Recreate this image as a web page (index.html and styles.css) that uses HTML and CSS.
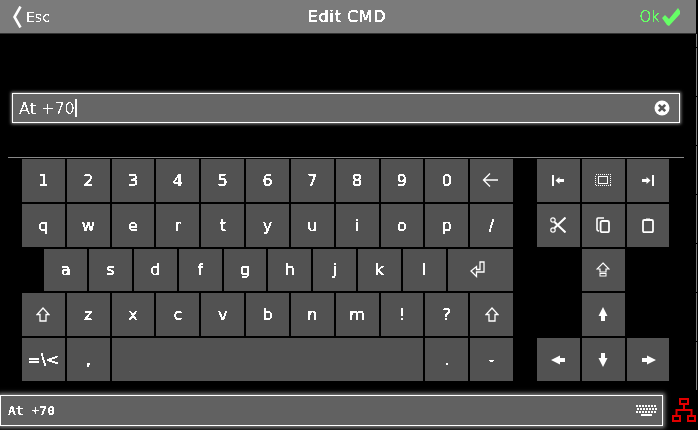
FILE: index.html
```html
<!DOCTYPE html>
<html lang="en">
<head>
<meta charset="utf-8">
<title>Edit CMD</title>
<link rel="stylesheet" href="styles.css">
</head>
<body>
<svg class="defs" width="0" height="0" aria-hidden="true">
  <filter id="crisp-bold" color-interpolation-filters="sRGB" x="0" y="0" width="100%" height="100%"><feComponentTransfer><feFuncA type="discrete" tableValues="0 1 1 1"/></feComponentTransfer></filter>
  <filter id="crisp-thin" color-interpolation-filters="sRGB" x="0" y="0" width="100%" height="100%"><feComponentTransfer><feFuncA type="discrete" tableValues="0 0 0 1 1"/></feComponentTransfer></filter>
  <filter id="crisp-mid" color-interpolation-filters="sRGB" x="0" y="0" width="100%" height="100%"><feComponentTransfer><feFuncA type="discrete" tableValues="0 0 1 1"/></feComponentTransfer></filter>
</svg>
<header class="titlebar">
  <div class="esc"><svg class="chev" viewBox="0 0 10 22" width="10" height="22"><path d="M8.5 0.5 L2.5 11 L8.5 21.5" fill="none" stroke="#fff" stroke-width="2.6"/></svg><span class="mid">Esc</span></div>
  <div class="title"><span class="bold">Edit CMD</span></div>
  <div class="ok"><span class="mid">Ok</span><svg viewBox="0 0 18 18" width="18" height="18"><path d="M0 10 L3 7 L7 11 L16 0 L18 3 L18 6 L7 18 L5 17 Z" fill="#66ff66"/></svg></div>
</header>
<section class="inputarea">
  <div class="field">
    <span class="fieldtext thin">At +70</span><span class="caret"></span>
    <svg class="clear" viewBox="0 0 16 16" width="16" height="16"><circle cx="8" cy="8" r="7.5" fill="#fff"/><path d="M4.8 4.8 L11.2 11.2 M11.2 4.8 L4.8 11.2" stroke="#555" stroke-width="2.6"/></svg>
  </div>
</section>
<hr class="rule">
<main class="keyboard">
  <div class="keys">
    <div class="key"><span class="cap">1</span></div><div class="key"><span class="cap">2</span></div><div class="key"><span class="cap">3</span></div><div class="key"><span class="cap">4</span></div><div class="key"><span class="cap">5</span></div><div class="key"><span class="cap">6</span></div><div class="key"><span class="cap">7</span></div><div class="key"><span class="cap">8</span></div><div class="key"><span class="cap">9</span></div><div class="key"><span class="cap">0</span></div>
    <div class="key back"><svg viewBox="0 0 16 14" width="16" height="14"><path d="M16 7 H1.5 M8 0.5 L1.5 7 L8 13.5" fill="none" stroke="#fff" stroke-width="1.3"/></svg></div>
    <div class="key"><span class="cap">q</span></div><div class="key"><span class="cap">w</span></div><div class="key"><span class="cap">e</span></div><div class="key"><span class="cap">r</span></div><div class="key"><span class="cap">t</span></div><div class="key"><span class="cap">y</span></div><div class="key"><span class="cap">u</span></div><div class="key"><span class="cap">i</span></div><div class="key"><span class="cap">o</span></div><div class="key"><span class="cap">p</span></div><div class="key"><span class="cap">/</span></div>
    <div class="key start2"><span class="cap">a</span></div><div class="key"><span class="cap">s</span></div><div class="key"><span class="cap">d</span></div><div class="key"><span class="cap">f</span></div><div class="key"><span class="cap">g</span></div><div class="key"><span class="cap">h</span></div><div class="key"><span class="cap">j</span></div><div class="key"><span class="cap">k</span></div><div class="key"><span class="cap">l</span></div>
    <div class="key wide3"><svg viewBox="0 0 15 17" width="15" height="17"><path d="M10 1 H14 V11 H6.5 V15.5 L1 10 L6.5 5.5 V8.5 H10 Z" fill="none" stroke="#fff" stroke-width="1.3"/></svg></div>
    <div class="key"><svg viewBox="0 0 14 15" width="14" height="15"><path d="M7 1 L13 7.5 H10 V14 H4 V7.5 H1 Z" fill="none" stroke="#fff" stroke-width="1.3"/></svg></div>
    <div class="key"><span class="cap">z</span></div><div class="key"><span class="cap">x</span></div><div class="key"><span class="cap">c</span></div><div class="key"><span class="cap">v</span></div><div class="key"><span class="cap">b</span></div><div class="key"><span class="cap">n</span></div><div class="key"><span class="cap">m</span></div><div class="key"><span class="cap">!</span></div><div class="key"><span class="cap">?</span></div>
    <div class="key"><svg viewBox="0 0 14 15" width="14" height="15"><path d="M7 1 L13 7.5 H10 V14 H4 V7.5 H1 Z" fill="none" stroke="#fff" stroke-width="1.3"/></svg></div>
    <div class="key"><span class="cap">=\&lt;</span></div><div class="key"><span class="cap">,</span></div><div class="key space"></div><div class="key"><span class="cap">.</span></div><div class="key"><span class="cap">-</span></div>
  </div>
  <div class="nav">
    <div class="key"><svg viewBox="0 0 12 11" width="12" height="11"><path d="M1 0 V11" stroke="#fff" stroke-width="2"/><path d="M3.5 5.5 L7.5 2 V4 H12 V7 H7.5 V9 Z" fill="#fff"/></svg></div>
    <div class="key"><svg class="sharp" viewBox="0 0 16 12" width="16" height="12"><rect x="0.5" y="0.5" width="15" height="11" fill="none" stroke="#fff" stroke-dasharray="1 1"/><rect x="3.5" y="2.5" width="9" height="7" fill="none" stroke="#fff"/></svg></div>
    <div class="key"><svg viewBox="0 0 12 11" width="12" height="11"><path d="M11 0 V11" stroke="#fff" stroke-width="2"/><path d="M8.5 5.5 L4.5 2 V4 H0 V7 H4.5 V9 Z" fill="#fff"/></svg></div>
    <div class="key"><svg viewBox="0 0 16 16" width="16" height="16"><path d="M4.5 5 L15.5 15.5 M4.5 11 L15.5 0.5" stroke="#fff" stroke-width="2"/><circle cx="3" cy="3" r="2.2" fill="none" stroke="#fff" stroke-width="1.2"/><circle cx="3" cy="13" r="2.2" fill="none" stroke="#fff" stroke-width="1.2"/></svg></div>
    <div class="key"><svg viewBox="0 0 14 16" width="14" height="16"><path d="M3 14 Q1 14 1 12 V2 Q1 1 2 1 H8" fill="none" stroke="#fff" stroke-width="1.6"/><rect x="4.6" y="4" width="8.4" height="11.2" rx="1.5" fill="none" stroke="#fff" stroke-width="1.8"/></svg></div>
    <div class="key"><svg viewBox="0 0 12 15" width="12" height="15"><rect x="1" y="2" width="10" height="12.2" rx="1.2" fill="none" stroke="#fff" stroke-width="1.8"/><rect x="4" y="0.5" width="4" height="2.5" fill="#fff"/></svg></div>
    <div class="key col2"><svg viewBox="0 0 14 15" width="14" height="15"><path d="M7 1 L13 7 H10 V10 H4 V7 H1 Z" fill="none" stroke="#fff" stroke-width="1.2"/><rect x="4" y="11.5" width="6" height="2.5" fill="none" stroke="#fff"/></svg></div>
    <div class="key col2"><svg viewBox="0 0 10 15" width="10" height="15"><path d="M5 0 L9.5 9 H7 V14 H3 V9 H0.5 Z" fill="#fff"/></svg></div>
    <div class="key col1"><svg viewBox="0 0 15 10" width="15" height="10"><path d="M0 5 L9 0.5 V3 H14 V7 H9 V9.5 Z" fill="#fff"/></svg></div>
    <div class="key"><svg viewBox="0 0 10 15" width="10" height="15"><path d="M5 15 L9.5 6 H7 V1 H3 V6 H0.5 Z" fill="#fff"/></svg></div>
    <div class="key"><svg viewBox="0 0 15 10" width="15" height="10"><path d="M15 5 L6 0.5 V3 H1 V7 H6 V9.5 Z" fill="#fff"/></svg></div>
  </div>
</main>
<footer class="cmdline">
  <div class="cmdfield">
    <span class="cmdtext">At +70</span>
    <svg class="sharp" viewBox="0 0 21 11" width="21" height="11"><path d="M0 1 H21 M1 4 H21 M0 7 H21" stroke="#fff" stroke-width="2" stroke-dasharray="2 1"/><rect x="5" y="9" width="11" height="2" fill="#fff"/></svg>
  </div>
  <svg class="net" viewBox="0 0 24 24" width="24" height="24"><g fill="none" stroke="#e00000" stroke-width="2"><rect x="8" y="1" width="8" height="5"/><rect x="1" y="18" width="7" height="5"/><rect x="16" y="18" width="7" height="5"/><path d="M12 6 V12 M4.5 18 V12 H19.5 V18"/></g></svg>
</footer>
</body>
</html>
```
FILE: styles.css
```css
* { box-sizing: border-box; }
html, body { margin: 0; height: 100%; }
body {
  position: relative;
  width: 698px;
  height: 430px;
  background: #000;
  color: #fff;
  font-family: "DejaVu Sans", sans-serif;
  overflow: hidden;
  display: flex;
  flex-direction: column;
}
body::after {
  content: "";
  position: absolute;
  left: 696px;
  top: 34px;
  width: 1px;
  height: 356px;
  background: linear-gradient(#000 0 1px, #808080 1px) 0 13px / 100% 49px;
}
.defs { position: absolute; }
.bold, .cap { filter: url(#crisp-bold); }
.thin { filter: url(#crisp-thin); }
.mid { filter: url(#crisp-mid); }
.sharp { shape-rendering: crispEdges; }
.titlebar {
  width: 696px;
  height: 34px;
  background: #7b7b7b;
  border-bottom: 1px solid #333;
  display: grid;
  grid-template-columns: 1fr auto 1fr;
  align-items: center;
  flex: none;
}
.esc { display: flex; align-items: center; gap: 4px; padding-left: 12px; font-size: 14px; }
.title { font-size: 16px; letter-spacing: 0.6px; padding-right: 2px; }
.ok { display: flex; align-items: center; justify-content: flex-end; gap: 2px; padding-right: 16px; color: #66ff66; font-size: 15px; }
.inputarea { height: 123px; padding-top: 59px; flex: none; }
.field {
  margin-left: 12px;
  width: 668px;
  height: 30px;
  background: #666;
  border: 1px solid #fff;
  box-shadow: 0 0 3px 1px rgba(255,255,255,.55);
  display: flex;
  align-items: center;
  padding-left: 6px;
  font-size: 16px;
  color: #fff;
}
.fieldtext { white-space: pre; }
.caret { width: 2px; height: 18px; background: #fff; }
.clear { margin-left: auto; margin-right: 9px; }
.rule { margin: 0 0 0 8px; width: 676px; height: 1px; border: 0; background: #888; flex: none; }
.keyboard { display: flex; padding: 1px 0 0 22px; gap: 24px; flex: none; }
.keys {
  width: 491px;
  display: grid;
  grid-template-columns: repeat(22, 20.41px);
  grid-auto-rows: 42.8px;
  gap: 2px;
}
.keys .key { grid-column: span 2; }
.keys .start2 { grid-column: 2 / span 2; }
.keys .wide3 { grid-column: span 3; padding-right: 5px; }
.keys .space { grid-column: span 14; }
.keys .back { padding-right: 4px; }
.nav {
  display: grid;
  grid-template-columns: repeat(3, 42.82px);
  grid-auto-rows: 42.8px;
  gap: 2px;
  width: 132.5px;
}
.nav .col1 { grid-column: 1; }
.nav .col2 { grid-column: 2; }
.key {
  background: #525252;
  display: flex;
  align-items: center;
  justify-content: center;
  font-size: 16px;
  color: #fff;
}
.cmdline { display: flex; align-items: center; margin-top: 14px; flex: none; }
.cmdfield {
  width: 663px;
  height: 31px;
  background: #616161;
  border: 1px solid #fff;
  box-shadow: 0 0 4px 2px rgba(255,255,255,.5);
  display: flex;
  align-items: center;
  justify-content: space-between;
  padding: 0 5px 0 7px;
}
.cmdtext { font-family: "DejaVu Sans Mono", monospace; font-weight: 700; font-size: 13px; filter: url(#crisp-mid); }
.net { margin-left: 9px; }
```
